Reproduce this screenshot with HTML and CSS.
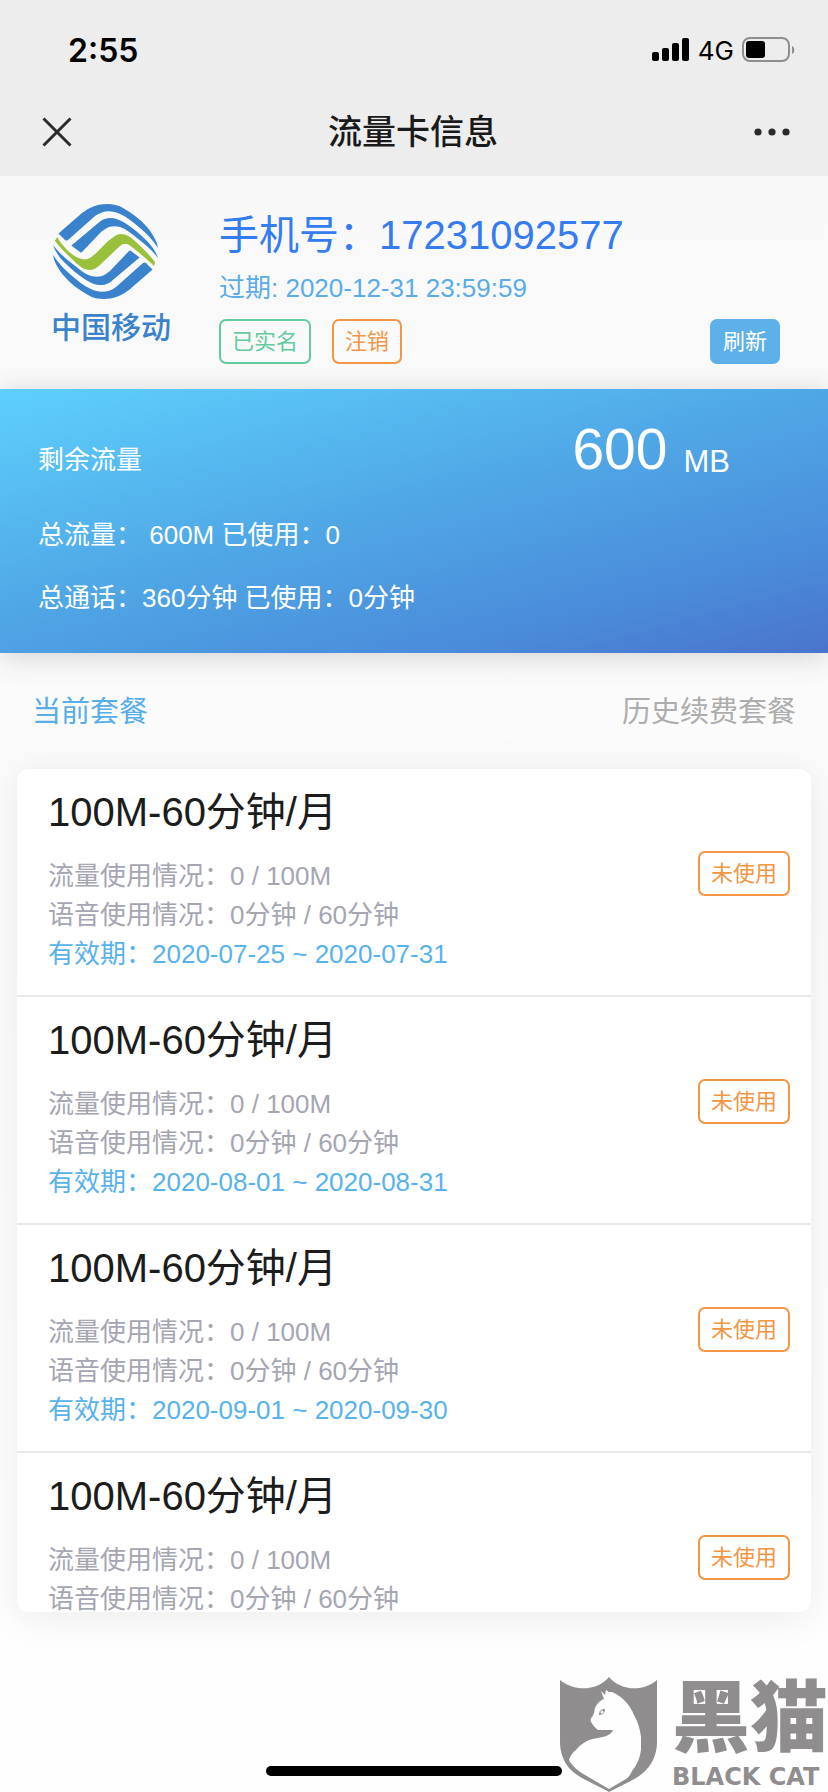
FILE: index.html
```html
<!DOCTYPE html>
<html lang="zh-CN">
<head>
<meta charset="utf-8">
<meta name="viewport" content="width=device-width, initial-scale=1">
<title>流量卡信息</title>
<link rel="stylesheet" href="styles.css">
</head>
<body>
<div class="screen">
  <header class="top">
    <div class="status">
      <span class="time">2:55</span>
      <span class="signals">
        <svg class="bars" viewBox="0 0 38 24" aria-hidden="true"><rect x="0" y="14" width="7" height="9" rx="2"/><rect x="10" y="10" width="7" height="13" rx="2"/><rect x="20" y="5" width="7" height="18" rx="2"/><rect x="30" y="0" width="7" height="23" rx="2"/></svg>
        <span class="network">4G</span>
        <svg class="battery" viewBox="0 0 54 26" aria-hidden="true"><rect x="1" y="1" width="46" height="23" rx="7" fill="none" stroke="#8e8e8e" stroke-width="2"/><rect x="4" y="4" width="19" height="17" rx="3"/><path d="M50 9c3 1 3 7 0 8z" fill="#8e8e8e"/></svg>
      </span>
    </div>
    <nav class="navbar">
      <button class="icon-button" type="button" aria-label="关闭"><svg class="close" viewBox="0 0 30 30" aria-hidden="true"><path d="M1.500 1.500 28.500 28.500M28.500 1.500 1.500 28.500"/></svg></button>
      <h1 class="title">流量卡信息</h1>
      <button class="icon-button" type="button" aria-label="更多"><svg class="more" viewBox="0 0 36 8" aria-hidden="true"><circle cx="4" cy="4" r="3.600"/><circle cx="18" cy="4" r="3.600"/><circle cx="32" cy="4" r="3.600"/></svg></button>
    </nav>
  </header>

  <section class="account">
    <div class="carrier">
      <svg class="carrier-logo" viewBox="0 0 105 97" aria-hidden="true">
        <defs>
          <g id="waves">
            <path d="M6 30 29 10C37 4 45 1 54 1c6 0 11 1 16 4 9 5 17 11 24 19 5 6 10 14 11 21C99 36 93 30 87 25 80 19 74 14 67 11c-8-4-17-4-25 2L15 37q-2 1-3 0L6 31q-1-.500 0-1z"/>
            <path d="M19 42 44 21c4-4 8-6 13-6 6 0 10 2 15 5 8 5 15 11 22 18 5 5 9 11 11 17-6-8-13-14-21-20-6-5-11-9-17-11-4-1-8-1-11 0-3 1-5 3-8 5L29 49q-1 1-2 0l-8-6q-1-.500 0-1z"/>
          </g>
        </defs>
        <g fill="#3a83cc">
          <use href="#waves"/>
          <use href="#waves" transform="rotate(180 52.500 48.500)"/>
        </g>
        <path fill="#9ac03c" d="M4 34c3 5 7 10 11 14 5 4 9 7 14 8 3 1 6 0 8-1 6-4 11-10 17-16 5-4 8-7 13-8 4 0 7 1 10 3 9 7 18 16 25 25l-1 4c-5-5-11-10-17-15-4-3-7-6-10-7-3 0-5 0-7 2-6 5-11 11-17 16-4 4-8 8-13 8s-9-3-13-6C17 54 9 47 2 38z"/>
      </svg>
      <span class="carrier-name">中国移动</span>
    </div>
    <div class="details">
      <p class="phone">手机号：17231092577</p>
      <p class="expiry">过期: 2020-12-31 23:59:59</p>
      <div class="actions">
        <span class="tag tag-green">已实名</span>
        <button class="tag tag-orange" type="button">注销</button>
        <button class="tag tag-solid" type="button">刷新</button>
      </div>
    </div>
  </section>

  <section class="usage">
    <div class="remaining">
      <span class="remaining-label">剩余流量</span>
      <span class="amount"><span class="amount-value">600</span><span class="amount-unit">MB</span></span>
    </div>
    <p class="usage-line">总流量： 600M 已使用：0</p>
    <p class="usage-line">总通话：360分钟 已使用：0分钟</p>
  </section>

  <div class="tabs" role="tablist">
    <button class="tab tab-active" type="button" role="tab" aria-selected="true">当前套餐</button>
    <button class="tab" type="button" role="tab" aria-selected="false">历史续费套餐</button>
  </div>

  <ul class="plans">
    <li class="plan">
      <div class="plan-info">
        <h2 class="plan-name">100M-60分钟/月</h2>
        <p class="plan-line">流量使用情况：0 / 100M</p>
        <p class="plan-line">语音使用情况：0分钟 / 60分钟</p>
        <p class="plan-line plan-valid">有效期：2020-07-25 ~ 2020-07-31</p>
      </div>
      <span class="tag tag-orange plan-state">未使用</span>
    </li>
    <li class="plan">
      <div class="plan-info">
        <h2 class="plan-name">100M-60分钟/月</h2>
        <p class="plan-line">流量使用情况：0 / 100M</p>
        <p class="plan-line">语音使用情况：0分钟 / 60分钟</p>
        <p class="plan-line plan-valid">有效期：2020-08-01 ~ 2020-08-31</p>
      </div>
      <span class="tag tag-orange plan-state">未使用</span>
    </li>
    <li class="plan">
      <div class="plan-info">
        <h2 class="plan-name">100M-60分钟/月</h2>
        <p class="plan-line">流量使用情况：0 / 100M</p>
        <p class="plan-line">语音使用情况：0分钟 / 60分钟</p>
        <p class="plan-line plan-valid">有效期：2020-09-01 ~ 2020-09-30</p>
      </div>
      <span class="tag tag-orange plan-state">未使用</span>
    </li>
    <li class="plan">
      <div class="plan-info">
        <h2 class="plan-name">100M-60分钟/月</h2>
        <p class="plan-line">流量使用情况：0 / 100M</p>
        <p class="plan-line">语音使用情况：0分钟 / 60分钟</p>
      </div>
      <span class="tag tag-orange plan-state">未使用</span>
    </li>
  </ul>

  <div class="home-bar"></div>

  <div class="watermark">
    <svg class="shield" viewBox="0 0 98 116" aria-hidden="true">
      <path fill="#908d8e" d="M0 4c15 12 37 11 49-3 12 14 34 15 48 3v62c0 11-4 21-11 28-7 8-20 13-37 22C31 106 19 102 11 94 4 87 0 77 0 66z"/>
      <path fill="#fefefe" d="M41 15 45 19 46 14 49 16 52 16C57 18 61 21 64 24 69 29 72 34 74 39 78 46 80 53 81 61V74C80 82 77 89 72 95 70 99 69 101 66 103L49 113 25 99C18 95 12 90 9 84 10 80 13 76 16 74 19 70 23 67 27 65 33 62 40 62 46 60 49 59 52 57 53 54H38C35 52 33 49 31 46 30 44 31 42 32 41 35 37 34 35 35 32 37 28 39 25 44 23z"/>
      <path fill="#908d8e" d="M39 39c0-4 2-6 6-6 0 3-2 6-6 6z"/><circle cx="42" cy="36" r="1.500" fill="#fefefe"/>
    </svg>
    <span class="watermark-text"><span class="watermark-cn">黑猫</span><span class="watermark-en">BLACK CAT</span></span>
  </div>
</div>
</body>
</html>
```
FILE: styles.css
```css
* { box-sizing: border-box; }

body {
  margin: 0;
  font-family: "Liberation Sans", "Noto Sans CJK SC", sans-serif;
  color: #1c1c1c;
}

h1, h2, p, ul { margin: 0; padding: 0; font-weight: 400; }

button {
  margin: 0;
  padding: 0;
  border: 0;
  background: none;
  font: inherit;
  color: inherit;
}

.screen {
  position: relative;
  display: flex;
  flex-direction: column;
  height: 100vh;
  overflow: hidden;
  background: linear-gradient(#f8f8f8, #fefefe 85%);
}

/* Status bar and title bar */
.top { background: #ededed; color: #000; }

.status {
  display: flex;
  align-items: center;
  justify-content: space-between;
  height: 88px;
  padding: 12px 32px 0 68px;
  font-family: Inter, sans-serif;
}

.time { font-size: 32px; font-weight: 600; }
.signals { display: flex; align-items: center; gap: 8px; }
.bars { width: 38px; height: 24px; }
.network { font-size: 26px; }
.battery { width: 54px; height: 26px; }

.navbar {
  display: flex;
  align-items: center;
  justify-content: space-between;
  height: 88px;
  padding: 0 32px 0 36px;
}

.icon-button { display: flex; padding: 6px; }
.close { width: 30px; height: 30px; fill: none; stroke: #2b2b2b; stroke-width: 3; }
.more { width: 36px; height: 8px; fill: #2b2b2b; }
.title { font-size: 34px; line-height: 48px; font-weight: 500; color: #1a1a1a; }

/* Account */
.account {
  display: flex;
  padding: 27px 48px 25px 51px;
}

.carrier {
  display: flex;
  flex-direction: column;
  width: 168px;
}

.carrier-logo { width: 105px; height: 97px; margin-left: 2px; }
.carrier-name { margin-top: 8px; font-size: 30px; line-height: 40px; font-weight: 500; color: #3a83cc; }
.details { flex: 1; padding-top: 4px; }
.phone { font-size: 40px; line-height: 56px; color: #357cf0; }
.expiry { margin-top: 6px; font-size: 26px; line-height: 38px; color: #5aade8; }

.actions { display: flex; gap: 21px; margin-top: 12px; }

.tag {
  flex: none;
  height: 45px;
  padding: 0 11px;
  border: 2px solid;
  border-radius: 7px;
  font-size: 22px;
  line-height: 41px;
}

.tag-green { color: #62cba0; }
.tag-orange { color: #f29645; }
.tag-solid { margin-left: auto; border-color: #5eb0e8; background: #5eb0e8; color: #fff; }

/* Data usage */
.usage {
  padding: 28px 38px 36px;
  background: linear-gradient(165deg, #5ed0fd, #50a8e6 45%, #4a8cda 78%, #4a74cd);
  box-shadow: 0 4px 28px rgba(0, 0, 0, 0.16);
  color: #fff;
}

.remaining {
  display: flex;
  align-items: flex-end;
  justify-content: space-between;
  height: 64px;
  padding-right: 60px;
}

.remaining-label { font-size: 26px; line-height: 42px; }
.amount { display: flex; align-items: flex-end; gap: 16px; }
.amount-value { font-size: 57px; line-height: 64px; }
.amount-unit { font-size: 31px; line-height: 38px; }
.usage-line { margin-top: 25px; font-size: 26px; line-height: 38px; }
.remaining + .usage-line { margin-top: 35px; }

/* Plans */
.tabs {
  display: flex;
  align-items: center;
  justify-content: space-between;
  height: 116px;
  padding: 0 32px 4px;
  font-size: 29px;
  color: #adadad;
}

.tab-active { color: #58aee9; }

.plans {
  flex: 1;
  min-height: 0;
  margin: 0 17px 180px;
  overflow: hidden;
  border-radius: 12px;
  background: #fff;
  box-shadow: 0 4px 40px rgba(0, 0, 0, 0.08);
  list-style: none;
}

.plan {
  display: flex;
  align-items: flex-start;
  justify-content: space-between;
  height: 228px;
  padding: 15px 21px 0 31px;
  border-bottom: 2px solid #e9e9eb;
}

.plan-name { font-size: 40px; line-height: 56px; margin-bottom: 17px; }
.plan-line { font-size: 26px; line-height: 39px; color: #a5a6b1; }
.plan-valid { color: #58b2ec; }
.plan-state { margin-top: 67px; }

.home-bar {
  position: absolute;
  bottom: 16px;
  left: 50%;
  width: 296px;
  height: 10px;
  margin-left: -148px;
  border-radius: 5px;
  background: #000;
}

.watermark {
  position: absolute;
  right: 0;
  bottom: 0;
  display: flex;
  align-items: flex-end;
  gap: 14px;
  color: #908d8e;
}

.shield { width: 98px; height: 116px; }
.watermark-text { display: flex; flex-direction: column; gap: 14px; }
.watermark-cn { font-family: "Noto Sans CJK SC", sans-serif; font-size: 78px; line-height: 72px; font-weight: 900; }
.watermark-en { font-family: "DejaVu Sans", sans-serif; font-size: 24px; line-height: 30px; font-weight: 700; }
```
